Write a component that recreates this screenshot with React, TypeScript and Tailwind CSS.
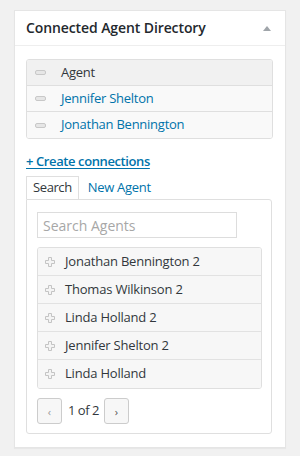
import React from 'react';

const Handle = () => (
  <span className="block w-[11px] h-[5px] rounded-[2px] border border-[#c8c8c8] bg-[#e6e6e6]" />
);

const Plus = () => (
  <svg width="10" height="10" viewBox="0 0 10 10" className="block">
    <path
      d="M3.5 0.5h3v3h3v3h-3v3h-3v-3h-3v-3h3z"
      fill="#f4f4f4"
      stroke="#c4c4c4"
      strokeWidth="1"
    />
  </svg>
);

export default function App() {
  const connected = ['Jennifer Shelton', 'Jonathan Bennington'];
  const results = [
    'Jonathan Bennington 2',
    'Thomas Wilkinson 2',
    'Linda Holland 2',
    'Jennifer Shelton 2',
    'Linda Holland',
  ];

  return (
    <div
      className="w-[300px] h-[456px] bg-[#f1f1f1] pt-[10px] pl-[14px]"
      style={{ fontFamily: '"Open Sans", "Noto Sans", sans-serif' }}
    >
      <div className="w-[272px] bg-white border border-[#e5e5e5] shadow-[0_1px_1px_rgba(0,0,0,0.04)]">
        {/* header */}
        <div className="h-[35px] border-b border-[#eeeeee] flex items-center justify-between pl-[11px] pr-[14px]">
          <h2 className="text-[14px] font-semibold text-[#23282d] leading-none tracking-[-0.1px]">Connected Agent Directory</h2>
          <span className="w-0 h-0 border-l-[4px] border-r-[4px] border-b-[5px] border-l-transparent border-r-transparent border-b-[#a0a5aa]" />
        </div>

        <div className="px-[11px] pt-[13px] pb-[13px]">
          {/* connections table */}
          <div className="w-[247px] border border-[#dfdfdf] rounded-[3px] overflow-hidden">
            <div className="h-[26px] bg-[#f1f1f1] border-b border-[#dfdfdf] flex items-center pl-[8px]">
              <Handle />
              <span className="ml-[15px] text-[13px] tracking-[-0.25px] text-[#32373c]">Agent</span>
            </div>
            {connected.map((name, i) => (
              <div
                key={name}
                className={`h-[26px] bg-[#f9f9f9] flex items-center pl-[8px] ${i < connected.length - 1 ? 'border-b border-[#dfdfdf]' : ''}`}
              >
                <Handle />
                <span className="ml-[15px] text-[13px] tracking-[-0.25px] text-[#0073aa]">{name}</span>
              </div>
            ))}
          </div>

          <div className="mt-[12px] h-[20px] flex items-center">
            <a className="text-[13px] font-semibold tracking-[-0.4px] text-[#0073aa] underline underline-offset-2 leading-none">+ Create connections</a>
          </div>

          {/* tabs */}
          <div className="mt-[6px] flex items-end h-[22px]">
            <div className="h-[23px] px-[6px] border border-b-0 border-[#dfdfdf] bg-white flex items-center relative z-10 text-[13px] tracking-[-0.4px] text-[#32373c]">
              Search
            </div>
            <div className="h-[22px] pl-[9px] flex items-center text-[13px] tracking-[-0.3px] text-[#0073aa]">New Agent</div>
          </div>
          <div className="w-[246px] border border-[#dfdfdf] rounded-b-[3px] rounded-tr-[3px] px-[10px] pt-[12px] pb-[9px]">
            <div className="w-[200px] h-[26px] border border-[#dddddd] flex items-center px-[5px] text-[14px] text-[#a7a7a7]">
              Search Agents
            </div>

            <div className="mt-[9px] w-[225px] border border-[#dfdfdf] rounded-[3px] overflow-hidden">
              {results.map((name, i) => (
                <div
                  key={name}
                  className={`h-[28px] bg-[#f7f7f7] flex items-center pl-[7px] ${i < results.length - 1 ? 'border-b border-[#e2e2e2]' : ''}`}
                >
                  <Plus />
                  <span className="ml-[10px] text-[13px] tracking-[-0.2px] text-[#32373c]">{name}</span>
                </div>
              ))}
            </div>

            <div className="mt-[9px] flex items-center h-[26px]">
              <span className="w-[25px] h-[26px] border border-[#cccccc] rounded-[3px] bg-[#f7f7f7] flex items-center justify-center text-[11px] text-[#999] leading-none">‹</span>
              <span className="ml-[6px] mr-[5px] text-[13px] tracking-[-0.5px] text-[#32373c]">1 of 2</span>
              <span className="w-[25px] h-[26px] border border-[#cccccc] rounded-[3px] bg-[#f7f7f7] flex items-center justify-center text-[11px] text-[#555] leading-none">›</span>
            </div>
          </div>
        </div>
      </div>
    </div>
  );
}
